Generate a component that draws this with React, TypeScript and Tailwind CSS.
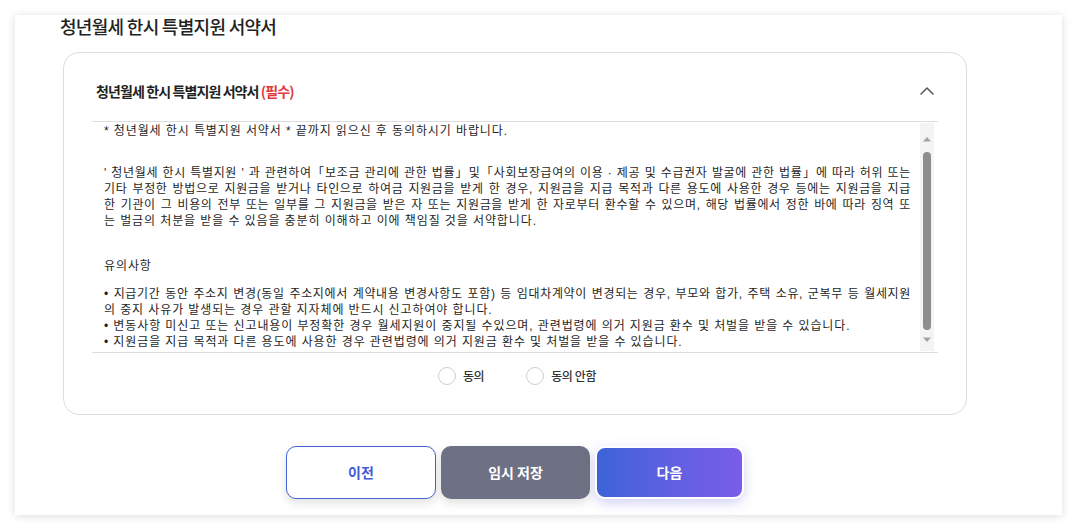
import React, { useState } from 'react';
import { ChevronUp } from 'lucide-react';

const KR = { fontFamily: '"Noto Sans CJK KR", "Noto Sans", sans-serif' };
const BODY = { fontFamily: '"Liberation Sans", "Noto Sans CJK KR", sans-serif' };

const pledgeLines = [
  " ' 청년월세 한시 특별지원 ' 과 관련하여「보조금 관리에 관한 법률」및「사회보장급여의 이용 · 제공 및 수급권자 발굴에 관한 법률」에 따라 허위 또는",
  '기타 부정한 방법으로 지원금을 받거나 타인으로 하여금 지원금을 받게 한 경우, 지원금을 지급 목적과 다른 용도에 사용한 경우 등에는 지원금을 지급',
  '한 기관이 그 비용의 전부 또는 일부를 그 지원금을 받은 자 또는 지원금을 받게 한 자로부터 환수할 수 있으며, 해당 법률에서 정한 바에 따라 징역 또',
];

const notices = [
  { text: '• 지급기간 동안 주소지 변경(동일 주소지에서 계약내용 변경사항도 포함) 등 임대차계약이 변경되는 경우, 부모와 합가, 주택 소유, 군복무 등 월세지원', full: true },
  { text: '의 중지 사유가 발생되는 경우 관할 지자체에 반드시 신고하여야 합니다.', full: false },
  { text: '• 변동사항 미신고 또는 신고내용이 부정확한 경우 월세지원이 중지될 수있으며, 관련법령에 의거 지원금 환수 및 처벌을 받을 수 있습니다.', full: false },
  { text: '• 지원금을 지급 목적과 다른 용도에 사용한 경우 관련법령에 의거 지원금 환수 및 처벌을 받을 수 있습니다.', full: false },
];

const Line = ({ children, full }: { children: React.ReactNode; full?: boolean }) => (
  <div
    className={
      'h-4 leading-4 whitespace-nowrap ' +
      (full ? 'w-[807px] tracking-[0.65px] text-justify [text-align-last:justify]' : 'tracking-[0.9px]')
    }
  >
    {children}
  </div>
);

const Radio = ({ label, checked, onClick }: { label: string; checked: boolean; onClick: () => void }) => (
  <button type="button" onClick={onClick} className="flex items-center gap-[7px]">
    <span className="w-[18px] h-[18px] rounded-full border border-[#cfcfcf] bg-white flex items-center justify-center">
      {checked && <span className="w-2 h-2 rounded-full bg-[#4a5fe0]" />}
    </span>
    <span className="text-[12px] font-medium text-[#333] tracking-[-0.4px]">{label}</span>
  </button>
);

export default function App() {
  const [agree, setAgree] = useState<'yes' | 'no' | null>(null);

  return (
    <div className="min-h-screen bg-white pt-[15px] px-[15px]" style={KR}>
      <div className="w-[1047px] h-[500px] bg-white shadow-[0_1px_8px_rgba(0,0,0,0.14)]">
        <h2 className="pl-[45px] text-[18px] leading-[22px] font-medium text-[#222] tracking-[-0.7px]">
          청년월세 한시 특별지원 서약서
        </h2>

        <div className="ml-[48px] mt-[15px] w-[904px] h-[363px] border border-[#dedede] rounded-[16px] px-[28px]">
          <div className="flex items-center justify-between pt-[26px] pb-[18px] pl-1 pr-[3px]">
            <div className="text-[14px] leading-5 font-bold text-[#222] tracking-[-0.9px]">
              청년월세 한시 특별지원 서약서 <span className="text-[#e0393e]">(필수)</span>
            </div>
            <ChevronUp size={24} strokeWidth={1.5} className="text-[#555] -mr-1" />
          </div>

          <div className="border-t border-b border-[#dddddd] h-[232px] flex">
            <div className="flex-1 pl-3 text-[12px] text-[#1f1f1f] overflow-hidden" style={BODY}>
              <div className="mt-[1px]">
                <Line>* 청년월세 한시 특별지원 서약서 * 끝까지 읽으신 후 동의하시기 바랍니다.</Line>
              </div>
              <div className="mt-[26px]">
                {pledgeLines.map((l, i) => (
                  <Line key={i} full>
                    {l}
                  </Line>
                ))}
                <Line>는 벌금의 처분을 받을 수 있음을 충분히 이해하고 이에 책임질 것을 서약합니다.</Line>
              </div>
              <div className="mt-[29px]">
                <Line>유의사항</Line>
              </div>
              <div className="mt-3">
                {notices.map((n, i) => (
                  <Line key={i} full={n.full}>
                    {n.text}
                  </Line>
                ))}
              </div>
            </div>

            <div className="w-[14px] mr-[4px] my-[1px] bg-[#f4f4f4] flex flex-col items-center">
              <svg width="10" height="6" viewBox="0 0 10 6" className="mt-[13px]">
                <path d="M1 5.5 L5 1 L9 5.5 Z" fill="#a3a3a3" />
              </svg>
              <div className="mt-[10px] w-2 h-[178px] rounded-full bg-[#8d8d8d]" />
              <svg width="10" height="6" viewBox="0 0 10 6" className="mt-[7px]">
                <path d="M1 0.5 L5 5 L9 0.5 Z" fill="#a3a3a3" />
              </svg>
            </div>
          </div>

          <div className="flex justify-center gap-[42px] mt-[14px] pl-[4px]">
            <Radio label="동의" checked={agree === 'yes'} onClick={() => setAgree('yes')} />
            <Radio label="동의 안함" checked={agree === 'no'} onClick={() => setAgree('no')} />
          </div>
        </div>

        <div className="flex justify-center gap-[5px] mt-[31px] ml-[48px] w-[904px]">
          <button className="w-[150px] h-[53px] rounded-[10px] border border-[#4561d8] bg-white text-[#3f5bd6] text-[14px] font-bold shadow-[0_4px_10px_rgba(0,0,0,0.12)]">
            이전
          </button>
          <button className="w-[149px] h-[53px] rounded-[10px] bg-[#6e7083] text-white text-[14px] font-bold shadow-[0_4px_10px_rgba(0,0,0,0.12)]">
            임시 저장
          </button>
          <button className="w-[149px] h-[53px] rounded-[10px] border-2 border-white bg-gradient-to-r from-[#3d63d8] to-[#7a5ce9] text-white text-[14px] font-bold shadow-[0_4px_12px_rgba(90,90,230,0.28)]">
            다음
          </button>
        </div>
      </div>
    </div>
  );
}
